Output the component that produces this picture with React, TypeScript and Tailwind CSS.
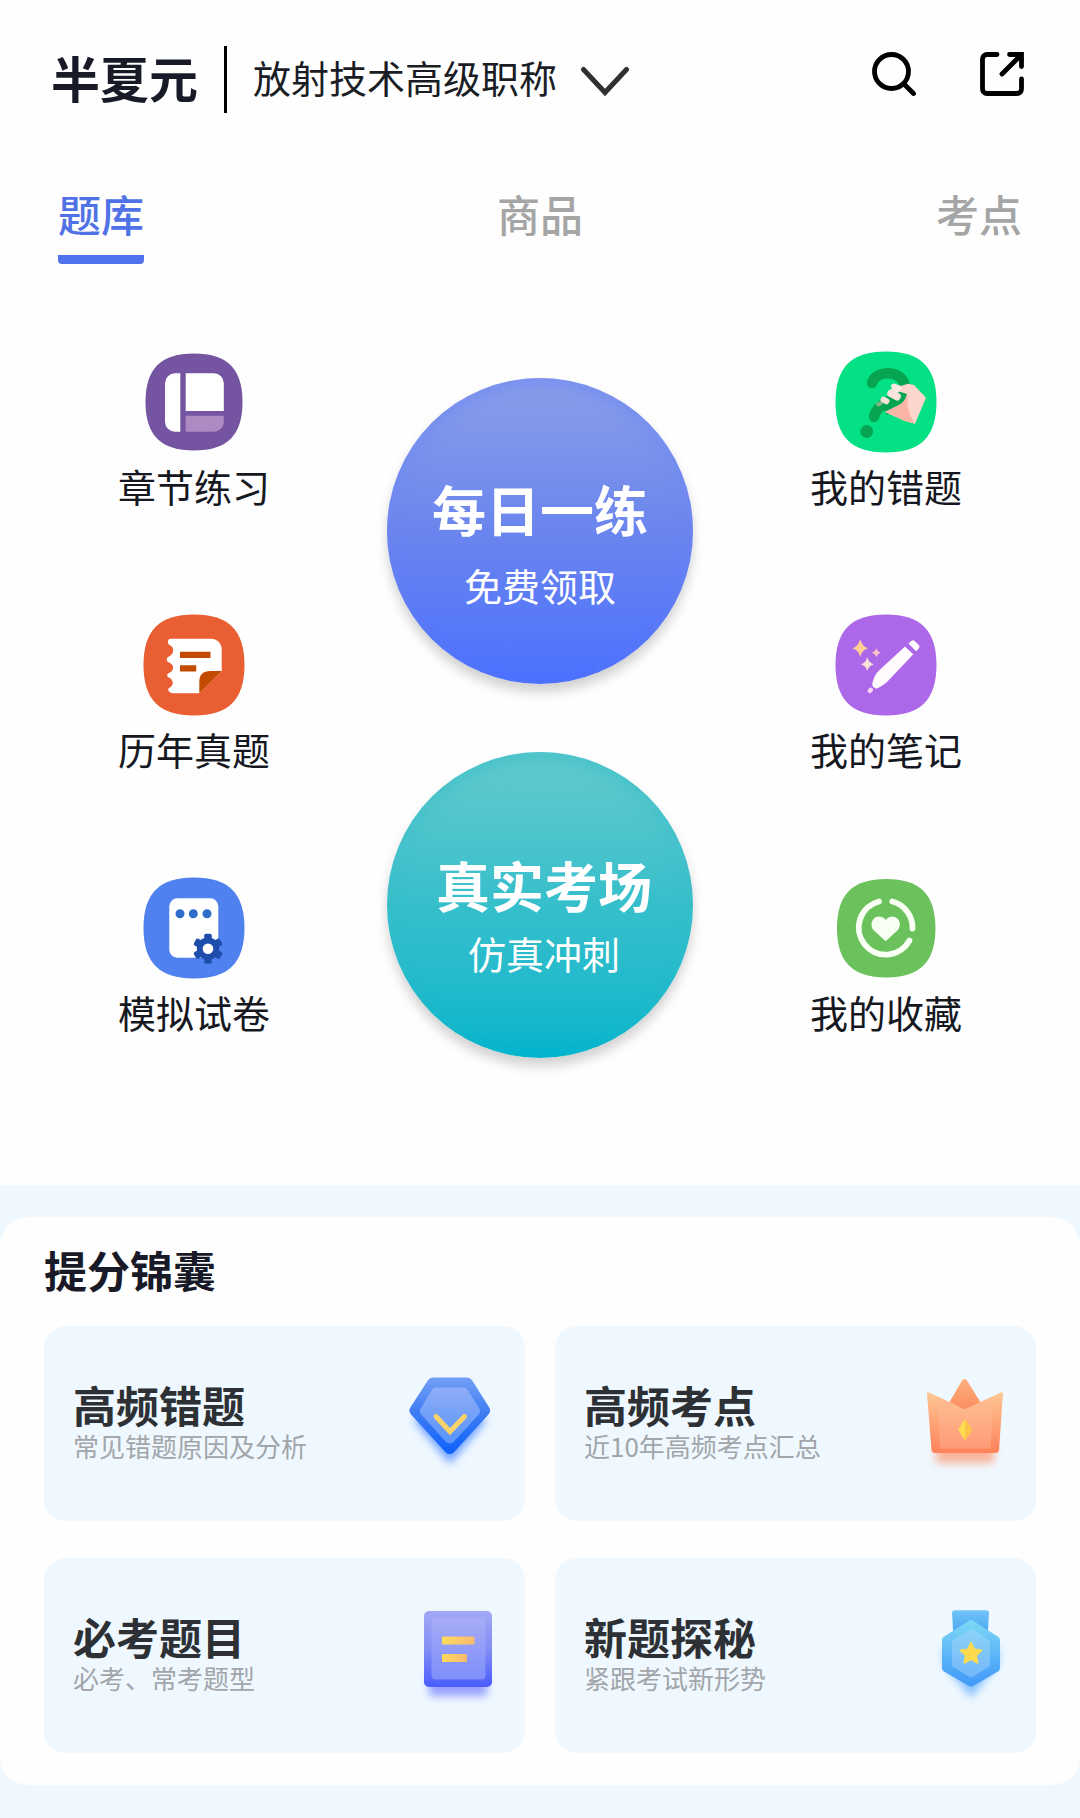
import { useState, type ReactNode } from 'react';

const SQUIRCLE = 'M51 0C86 0 102 16 102 51S86 102 51 102 0 86 0 51 16 0 51 0Z';

const SUBJECTS = ['放射技术高级职称'];
const TABS = ['题库', '商品', '考点'];

function ChapterIcon() {
  return (
    <svg className="size-[102px]" viewBox="0 0 102 102" aria-hidden="true">
      <path d={SQUIRCLE} fill="#7555a1" transform="translate(2.5 2.5) scale(.951)" />
      <path d="M37.3 22.3V80.7H32a10 10 0 0 1-10-10V32.3a10 10 0 0 1 10-10Z" fill="#fff" />
      <path d="M42.7 22.3H71a10 10 0 0 1 9.8 10V60H42.7Z" fill="#fff" />
      <path d="M42.7 64.7H80.8V71a10 10 0 0 1-9.8 9.7H42.7Z" fill="#ad8ac2" />
    </svg>
  );
}

function PastPaperIcon() {
  return (
    <svg className="size-[102px]" viewBox="0 0 102 102" aria-hidden="true">
      <path d={SQUIRCLE} fill="#e95e32" transform="translate(.5 .5) scale(.99)" />
      <path
        d="M27 24.7H68A10.7 10.7 0 0 1 78.7 35.4V57L56.3 79.3H30C26 78.5 24 76 26 74C31 72 31 66 26 63.5C23.5 62.5 23.5 60 26 59C31.5 57 31.5 50.5 26 48.5C23 47.5 23 43.5 26 42.5C31.5 40 31.5 33 26.5 31C24 29 24.5 25.5 27 24.7Z"
        fill="#fff"
      />
      <path d="M56.3 79.3V68C56.3 60.5 60 57 67.5 57H78.7Z" fill="#c24a02" />
      <path d="M37 37.7H67.5V44H37ZM37 51.3H53.2V57.5H37Z" fill="#c24a02" />
    </svg>
  );
}

function MockExamIcon() {
  return (
    <svg className="size-[102px]" viewBox="0 0 102 102" aria-hidden="true">
      <path d={SQUIRCLE} fill="#4f81ef" transform="translate(.5 .5) scale(.99)" />
      <rect x="26.3" y="21.3" width="49" height="59.4" rx="8" fill="#fff" />
      <g fill="#2f6dcb">
        <circle cx="37" cy="36.7" r="4.5" />
        <circle cx="50.3" cy="36.7" r="4.5" />
        <circle cx="64" cy="36.7" r="4.5" />
      </g>
      <g fill="#1f4dac" transform="translate(65 71.7)">
        <circle r="11.2" />
        <rect x="-3.8" y="-15" width="7.6" height="30" rx="1.8" />
        <rect x="-3.8" y="-15" width="7.6" height="30" rx="1.8" transform="rotate(60)" />
        <rect x="-3.8" y="-15" width="7.6" height="30" rx="1.8" transform="rotate(120)" />
        <circle r="5.3" fill="#fff" />
      </g>
    </svg>
  );
}

function MistakesIcon() {
  return (
    <svg className="size-[102px]" viewBox="0 0 102 102" aria-hidden="true">
      <path d={SQUIRCLE} fill="#03e184" transform="translate(.5 .5) scale(.99)" />
      <path
        d="M37 32C39 24 49 21.5 56 22.5C66 24 72 32 69 40C65 49 52 48 44 57C41 60 39.5 63 39 66"
        fill="none"
        stroke="#07a552"
        strokeWidth="10.5"
        strokeLinecap="round"
      />
      <circle cx="31.7" cy="80.5" r="6.4" fill="#07a552" />
      {/* Palm stays open between thumb and fingers so the mark shows through */}
      <path d="M50 60C60 56 68 50 71.5 43" fill="none" stroke="#07a552" strokeWidth="9" />
      <path d="M56.5 34.5L59 32.5 66 35 73 32.7 79 34 91 46.7 80 72.7 70 70 50 61 66 53C70 50 71 46 72 43L69 42 58 39Z" fill="#fcd6cd" />
      <path d="M50 61L66 53C70 50 71 46 73 44C71 55 74 64 80 72.7L70 70Z" fill="#fbb4a6" />
      <path d="M56 34L59 32.5 67 36 63 42 57 39Z" fill="#fdeae4" />
      <rect x="-7" y="-3.7" width="14" height="7.4" rx="3" fill="#fce3db" transform="translate(59 44) rotate(28)" />
      <rect x="-4.5" y="-3" width="9" height="6" rx="2.5" fill="#fce3db" transform="translate(50 49.5) rotate(28)" />
      <path d="M40.5 52.5L46 50 48 53 43 56Z" fill="#fbc6ba" opacity=".5" />
    </svg>
  );
}

function NotesIcon() {
  return (
    <svg className="size-[102px]" viewBox="0 0 102 102" aria-hidden="true">
      <path d={SQUIRCLE} fill="#ac68e9" transform="translate(.5 .5) scale(.99)" />
      <path d="M70 32.5L78.3 40.3 52 68C49 71 45 73 42 74.5 40 75 36.5 72 37.3 69.5 38.5 64.5 40 60.5 43.5 57Z" fill="#fffafd" />
      <path d="M73.5 29.5L76.2 27C77.2 26 78.7 26 79.7 27L83.7 31C84.7 32 84.7 33.5 83.7 34.5L81 37.2Z" fill="#fffafd" />
      <ellipse cx="35.3" cy="76.3" rx="3" ry="2.3" fill="#f9d3f2" transform="rotate(-45 35.3 76.3)" />
      <path d="M25.2 25Q27 32.5 33 34.2 27 36 25.2 43 23.5 36 17.5 34.2 23.5 32.5 25.2 25Z" fill="#ffcf96" />
      <path d="M32.3 43.3Q33.8 49 38.8 50.3 33.8 51.6 32.3 57 30.8 51.6 26 50.3 30.8 49 32.3 43.3Z" fill="#fce3d8" />
      <path d="M41.3 34Q42.3 37.8 45.8 38.8 42.3 39.8 41.3 43.6 40.3 39.8 36.8 38.8 40.3 37.8 41.3 34Z" fill="#fbc5cc" />
    </svg>
  );
}

function FavoritesIcon() {
  return (
    <svg className="size-[102px]" viewBox="0 0 102 102" aria-hidden="true">
      <path d={SQUIRCLE} fill="#6bc15c" transform="translate(2 2) scale(.965)" />
      <g fill="none" stroke="#f8fff3" strokeWidth="5.8" strokeLinecap="round">
        <path d="M44 24.5A27 27 0 1 0 74.5 63.5" />
        <path d="M57.3 24.5A27 27 0 0 1 77.5 51.5" />
      </g>
      <path
        d="M50.7 64.3L39 53.5C35.5 50 36 44.5 38.8 41.7 42.3 38.2 48 38.8 50.7 43 53.5 38.8 59 38.2 62.5 41.7 65.5 44.5 65.8 50 62.3 53.5Z"
        fill="#f8fff3"
      />
    </svg>
  );
}

function DiamondIcon() {
  return (
    <svg className="h-24 w-[84px] shrink-0 overflow-visible" viewBox="0 0 84 96" aria-hidden="true">
      <defs>
        <linearGradient id="diamondOuter" gradientUnits="userSpaceOnUse" x1="0" y1="2" x2="0" y2="79">
          <stop offset="0" stopColor="#729ff6" />
          <stop offset=".45" stopColor="#3f7df4" />
          <stop offset="1" stopColor="#0b60fb" />
        </linearGradient>
        <linearGradient id="diamondInner" gradientUnits="userSpaceOnUse" x1="0" y1="12" x2="0" y2="68">
          <stop offset="0" stopColor="#8fadf6" />
          <stop offset="1" stopColor="#5593fb" />
        </linearGradient>
        <filter id="diamondGlow" x="-50%" y="-50%" width="200%" height="200%">
          <feGaussianBlur stdDeviation="4" />
        </filter>
      </defs>
      <path d="M4 44L41 88 78 44 41 30Z" fill="#4f8cff" opacity=".8" filter="url(#diamondGlow)" />
      <path d="M24 7.5H58L75 34.5 40.8 72 6.500 34.5Z" fill="url(#diamondOuter)" stroke="url(#diamondOuter)" strokeWidth="12" strokeLinejoin="round" />
      <path d="M27.500 17H54L65.500 35 40.800 62 16.500 35Z" fill="url(#diamondInner)" stroke="url(#diamondInner)" strokeWidth="11" strokeLinejoin="round" />
      <path d="M27 40.5L41 55.5 55.500 40.5" fill="none" stroke="#f8d269" strokeWidth="5" strokeLinecap="round" />
    </svg>
  );
}

function CrownIcon() {
  return (
    <svg className="h-24 w-[84px] shrink-0 overflow-visible" viewBox="0 0 84 96" aria-hidden="true">
      <defs>
        <linearGradient id="crownOuter" x1="0" y1="0" x2="0" y2="1">
          <stop offset="0" stopColor="#fdc795" />
          <stop offset="1" stopColor="#ff8159" />
        </linearGradient>
        <linearGradient id="crownInner" x1="0" y1="0" x2="0" y2="1">
          <stop offset="0" stopColor="#fdbf92" />
          <stop offset="1" stopColor="#ff9a77" />
        </linearGradient>
        <linearGradient id="crownPeak" x1="0" y1="0" x2="0" y2="1">
          <stop offset="0" stopColor="#fdb07f" />
          <stop offset="1" stopColor="#fb8a5c" />
        </linearGradient>
        <filter id="crownGlow" x="-50%" y="-100%" width="200%" height="300%">
          <feGaussianBlur stdDeviation="4" />
        </filter>
      </defs>
      <rect x="16" y="68" width="58" height="19" fill="#ff9b78" opacity=".75" filter="url(#crownGlow)" />
      <path d="M42 4.5Q44.5 1.5 47 4.5L61 27 45 36 29 27Z" fill="url(#crownPeak)" />
      <path d="M7 17.5Q7 15.5 9 16.5L44.7 33.5 81 16.5Q83 15.5 83 17.5L79 74Q78.7 77 75.5 77H15Q12 77 11.5 74Z" fill="url(#crownOuter)" />
      <path d="M17 20.3L44.7 33.5 73 20.3 70.8 72.5H20Z" fill="url(#crownInner)" />
      <path d="M45 43L52 53.5 45 64.5 38 53.5Z" fill="#ffdb52" />
      <path d="M45 43L52 53.5 45 64.5Z" fill="#fdc548" />
    </svg>
  );
}

function NotebookIcon() {
  return (
    <svg className="h-24 w-[84px] shrink-0 overflow-visible" viewBox="0 0 84 96" aria-hidden="true">
      <defs>
        <linearGradient id="bookOuter" x1="0" y1="0" x2="0" y2="1">
          <stop offset="0" stopColor="#a3a8f5" />
          <stop offset=".5" stopColor="#838df5" />
          <stop offset="1" stopColor="#4a5cfc" />
        </linearGradient>
        <linearGradient id="bookInner" x1="0" y1="0" x2="0" y2="1">
          <stop offset="0" stopColor="#a5abf6" />
          <stop offset="1" stopColor="#7f8ffa" />
        </linearGradient>
        <linearGradient id="bookLine" x1="0" y1="0" x2="1" y2="0">
          <stop offset="0" stopColor="#ffdc5c" />
          <stop offset="1" stopColor="#f7b872" />
        </linearGradient>
        <filter id="bookGlow" x="-50%" y="-100%" width="200%" height="300%">
          <feGaussianBlur stdDeviation="4" />
        </filter>
      </defs>
      <rect x="20" y="68" width="58" height="20" fill="#6f7bff" opacity=".7" filter="url(#bookGlow)" />
      <rect x="15" y="3" width="68" height="76" rx="5" fill="url(#bookOuter)" />
      <rect x="22.5" y="10" width="54" height="61.5" rx="4" fill="url(#bookInner)" />
      <rect x="33" y="28.5" width="32.5" height="8" rx="1" fill="url(#bookLine)" />
      <rect x="33" y="46" width="25" height="8" rx="1" fill="url(#bookLine)" />
    </svg>
  );
}

function MedalIcon() {
  return (
    <svg className="h-24 w-[84px] shrink-0 overflow-visible" viewBox="0 0 84 96" aria-hidden="true">
      <defs>
        <linearGradient id="medalRibbon" x1="0" y1="0" x2="0" y2="1">
          <stop offset="0" stopColor="#72c4f8" />
          <stop offset="1" stopColor="#3f9ff0" />
        </linearGradient>
        <linearGradient id="medalOuter" x1="0" y1="0" x2="0" y2="1">
          <stop offset="0" stopColor="#7ad4f6" />
          <stop offset="1" stopColor="#439bf8" />
        </linearGradient>
        <linearGradient id="medalInner" x1="0" y1="0" x2="0" y2="1">
          <stop offset="0" stopColor="#8ad3f7" />
          <stop offset="1" stopColor="#74b8fb" />
        </linearGradient>
        <filter id="medalGlow" x="-50%" y="-50%" width="200%" height="200%">
          <feGaussianBlur stdDeviation="4" />
        </filter>
      </defs>
      <path d="M24 56L51 90 78 56V40H24Z" fill="#5aa9ff" opacity=".7" filter="url(#medalGlow)" />
      <path d="M35 2.3H66Q69 2.3 69 5L67.5 30H33.5L32 5Q32 2.3 35 2.3Z" fill="url(#medalRibbon)" />
      <path d="M51 16L76 32V60L51 74.5 26 60V32Z" fill="url(#medalOuter)" stroke="url(#medalOuter)" strokeWidth="8" strokeLinejoin="round" />
      <path d="M51 23L68 34V57L51 67.5 34 57V34Z" fill="url(#medalInner)" stroke="url(#medalInner)" strokeWidth="4" strokeLinejoin="round" />
      <path
        d="M51 34.5L54.3 41.3 61.8 42.3 56.3 47.5 57.7 55 51 51.4 44.3 55 45.7 47.5 40.2 42.3 47.7 41.3Z"
        fill="#ffda4f"
        stroke="#ffda4f"
        strokeWidth="1.5"
        strokeLinejoin="round"
      />
    </svg>
  );
}

interface Entry {
  label: string;
  icon: ReactNode;
}

const LEFT_ENTRIES: Entry[] = [
  { label: '章节练习', icon: <ChapterIcon /> },
  { label: '历年真题', icon: <PastPaperIcon /> },
  { label: '模拟试卷', icon: <MockExamIcon /> },
];

const RIGHT_ENTRIES: Entry[] = [
  { label: '我的错题', icon: <MistakesIcon /> },
  { label: '我的笔记', icon: <NotesIcon /> },
  { label: '我的收藏', icon: <FavoritesIcon /> },
];

const TIPS = [
  { title: '高频错题', desc: '常见错题原因及分析', icon: <DiamondIcon /> },
  { title: '高频考点', desc: '近10年高频考点汇总', icon: <CrownIcon /> },
  { title: '必考题目', desc: '必考、常考题型', icon: <NotebookIcon /> },
  { title: '新题探秘', desc: '紧跟考试新形势', icon: <MedalIcon /> },
];

function EntryColumn({ entries }: { entries: Entry[] }) {
  return (
    <div className="flex flex-col gap-[103px]">
      {entries.map((entry) => (
        <button key={entry.label} type="button" className="flex flex-col items-center gap-2">
          {entry.icon}
          <span className="text-[38px] leading-[50px] text-[#16181f]">{entry.label}</span>
        </button>
      ))}
    </div>
  );
}

export default function App() {
  const [activeTab, setActiveTab] = useState('题库');

  return (
    <div className="min-h-screen bg-[#eff8ff] font-['Noto_Sans_CJK_SC',sans-serif]">
      <div className="bg-[#fefefe] pb-[127px]">
        {/* Header */}
        <header className="flex items-center justify-between pt-[46px] pr-14 pl-[51px]">
          <div className="flex items-center">
            <h1 className="pb-1.5 text-[49px] leading-[60px] font-bold text-[#181a28]">半夏元</h1>
            <span className="mr-[26px] ml-[26px] h-[67px] w-[3px] bg-black" />
            <div className="relative pb-1.5">
              <select
                aria-label="考试科目"
                className="appearance-none bg-transparent pr-[72px] text-[38px] leading-[60px] text-[#1b1d25]"
              >
                {SUBJECTS.map((subject) => (
                  <option key={subject}>{subject}</option>
                ))}
              </select>
              <svg className="pointer-events-none absolute top-[18px] right-0 h-8 w-[50px]" viewBox="0 0 50 32" aria-hidden="true">
                <path d="M3.5 4.5L25 27.5 46.5 4.5" fill="none" stroke="#303030" strokeWidth="5" strokeLinecap="round" />
              </svg>
            </div>
          </div>
          <div className="flex gap-16 pb-3">
            <button type="button" aria-label="搜索">
              <svg className="size-11" viewBox="0 0 44 44" fill="none" stroke="#000" strokeWidth="4.8" strokeLinecap="round" aria-hidden="true">
                <circle cx="19.5" cy="19.5" r="17" />
                <path d="M32.5 32.5L41.5 41.5" />
              </svg>
            </button>
            <button type="button" aria-label="分享">
              <svg className="size-11" viewBox="0 0 44 44" fill="none" stroke="#000" strokeWidth="4.8" strokeLinecap="round" aria-hidden="true">
                <path d="M17 2.5H7A4.5 4.5 0 0 0 2.5 7V37A4.5 4.5 0 0 0 7 41.500H37A4.5 4.5 0 0 0 41.5 37V27" />
                <path d="M29.5 2.5H41.5V14.5M40.5 3.5L22 22" />
              </svg>
            </button>
          </div>
        </header>

        {/* Tabs */}
        <nav className="mt-[70px] flex justify-between px-[58px]">
          {TABS.map((tab) => (
            <button
              key={tab}
              type="button"
              onClick={() => setActiveTab(tab)}
              className={`flex flex-col gap-3 text-[43px] leading-[60px] font-medium ${activeTab === tab ? 'text-[#5072e6]' : 'text-[#a5a5a5]'}`}
            >
              {tab}
              <span className={`h-[9px] w-full rounded-b-sm ${activeTab === tab ? 'bg-[#5072ec]' : 'bg-transparent'}`} />
            </button>
          ))}
        </nav>

        {/* Practice entries */}
        <section className="mt-[87px] flex items-start justify-between px-[118px]">
          <EntryColumn entries={LEFT_ENTRIES} />
          <div className="flex flex-col gap-[68px] pt-[27px]">
            <button
              type="button"
              className="flex size-[306px] flex-col items-center justify-center gap-5 rounded-full bg-linear-to-b from-[#8b9fe8] via-[#6a85ee] to-[#4c70ff] pt-6 text-white shadow-[0_8px_12px_rgba(0,0,0,0.18),inset_0_8px_14px_rgba(110,135,245,0.6)]"
            >
              <span className="text-[54px] leading-[64px] font-bold">每日一练</span>
              <span className="text-[38px] leading-[48px]">免费领取</span>
            </button>
            <button
              type="button"
              className="flex size-[306px] flex-col items-center justify-center gap-3 rounded-full bg-linear-to-b from-[#62cace] via-[#35bfcb] to-[#00b5cd] pt-5 pl-2 text-white shadow-[0_8px_12px_rgba(0,0,0,0.18),inset_0_8px_14px_rgba(60,190,200,0.6)]"
            >
              <span className="text-[54px] leading-[64px] font-bold">真实考场</span>
              <span className="text-[38px] leading-[48px]">仿真冲刺</span>
            </button>
          </div>
          <EntryColumn entries={RIGHT_ENTRIES} />
        </section>
      </div>

      {/* Tips */}
      <section className="mt-8 rounded-[28px] bg-[#fefefe] px-11 pt-[22px] pb-8">
        <h2 className="text-[43px] leading-[60px] font-bold text-[#181a28]">提分锦囊</h2>
        <div className="mt-[27px] grid grid-cols-2 gap-x-[30px] gap-y-[37px]">
          {TIPS.map((tip) => (
            <button
              key={tip.title}
              type="button"
              className="flex h-[195px] items-center justify-between rounded-[22px] bg-[#eff8ff] pr-8 pl-[29px] text-left"
            >
              <span className="flex flex-col pb-1">
                <span className="text-[43px] leading-[48px] font-bold text-[#2d3135]">{tip.title}</span>
                <span className="text-[26px] leading-9 text-[#a2a6aa]">{tip.desc}</span>
              </span>
              {tip.icon}
            </button>
          ))}
        </div>
      </section>
    </div>
  );
}
